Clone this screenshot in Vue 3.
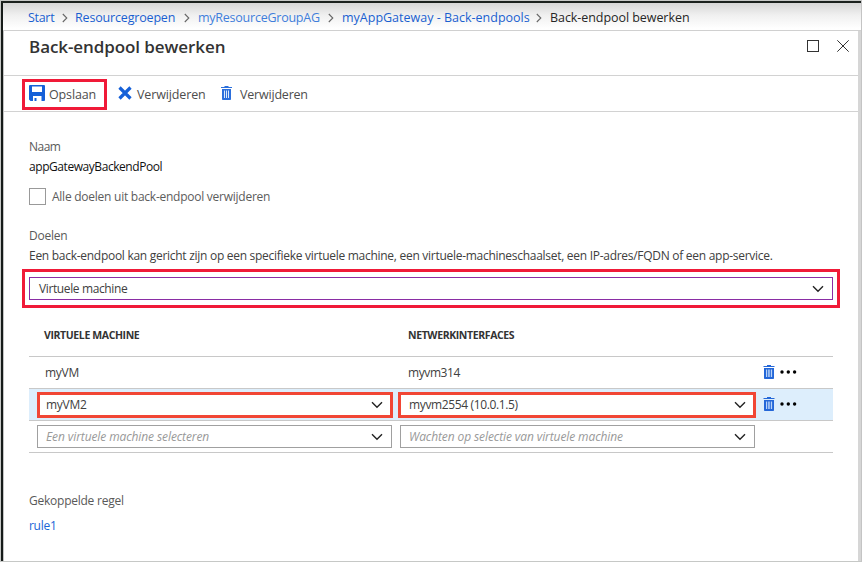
<script setup>
const crumbs = [
  { label: 'Start', cls: 'c1' },
  { label: 'Resourcegroepen', cls: 'c2' },
  { label: 'myResourceGroupAG', cls: 'c3' },
  { label: 'myAppGateway - Back-endpools', cls: 'c4' },
]
</script>

<template>
  <div class="frame">
    <nav class="crumbs">
      <template v-for="c in crumbs" :key="c.label">
        <a :class="c.cls">{{ c.label }}</a>
        <svg class="sep" width="6" height="10" viewBox="0 0 6 10"><path d="M.8 1 4.800 5 .8 9" /></svg>
      </template>
      <span class="c5">Back-endpool bewerken</span>
    </nav>

    <div class="blade">
      <header class="title-bar">
        <h1>Back-endpool bewerken</h1>
        <div class="window-icons">
          <svg width="12" height="12" viewBox="0 0 12 12"><rect x=".5" y=".5" width="11" height="11" /></svg>
          <svg width="12" height="12" viewBox="0 0 12 12"><path d="M.3 .3 11.7 11.7M11.7 .3 .3 11.7" /></svg>
        </div>
      </header>

      <div class="toolbar">
        <button class="save">
          <svg width="16" height="16" viewBox="0 0 16 16">
            <path fill="#1560d8" d="M1 0h14a1 1 0 0 1 1 1v14a1 1 0 0 1-1 1H1.500L0 14.500V1a1 1 0 0 1 1-1z" />
            <path fill="#fff" d="M3 1.500h10V7H3zM4 11h8.500v5H7.500v-3H5.500v3H4z" />
          </svg>
          <span>Opslaan</span>
        </button>
        <button class="remove">
          <svg width="14" height="14" viewBox="0 0 14 14"><path d="M1.500 1.500 12.500 12.500M12.500 1.500 1.500 12.500" stroke="#1560d8" stroke-width="3.200" fill="none" /></svg>
          <span>Verwijderen</span>
        </button>
        <button class="delete">
          <svg width="11" height="14" viewBox="0 0 11 14">
            <path fill="#2b6fdc" d="M3.500 0h4v1H11v1H0V1h3.500zM1 3h9v10.200a.8.800 0 0 1-.8.800H1.800a.8.800 0 0 1-.8-.8z" />
            <path fill="#dce9fb" d="M3 4.500h1V12H3zM5 4.500h1V12H5zM7 4.500h1V12H7z" />
          </svg>
          <span>Verwijderen</span>
        </button>
      </div>

      <main>
        <div class="label name-label"><span>Naam</span></div>
        <div class="value"><span>appGatewayBackendPool</span></div>
        <label class="check"><i></i><span>Alle doelen uit back-endpool verwijderen</span></label>
        <div class="label targets"><span>Doelen</span></div>
        <p><span>Een back-endpool kan gericht zijn op een specifieke virtuele machine, een virtuele-machineschaalset, een IP-adres/FQDN of een app-service.</span></p>

        <div class="marked">
          <div class="select primary">
            <span>Virtuele machine</span>
            <svg class="chev" width="12" height="8" viewBox="0 0 12 8"><path d="M1 1.200 6 6.200 11 1.200" /></svg>
          </div>
        </div>

        <section class="table">
          <div class="row head"><b class="h1">VIRTUELE MACHINE</b><b class="h2">NETWERKINTERFACES</b></div>
          <div class="row plain">
            <span class="vm">myVM</span><span class="nic">myvm314</span>
            <div class="actions">
              <svg width="12" height="14" viewBox="0 0 12 14">
                <path fill="#2467d8" d="M4 0h4v1h3.500v1H.5V1H4zM1 3h10v10.200a.8.800 0 0 1-.8.800H1.800a.8.800 0 0 1-.8-.8z" />
                <path fill="#b9d3f8" d="M3 4.500h1.200V12H3zM5 4.500h.8V12H5zM6.300 4.500h.8V12h-.8zM7.900 4.500h1.200V12H7.900z" />
              </svg>
              <svg class="dots" width="17" height="4" viewBox="0 0 17 4"><circle cx="2" cy="2" r="1.700" /><circle cx="8.300" cy="2" r="1.700" /><circle cx="14.600" cy="2" r="1.700" /></svg>
            </div>
          </div>
          <div class="row active">
            <div class="select hot">
              <span class="t1">myVM2</span>
              <svg class="chev" width="12" height="8" viewBox="0 0 12 8"><path d="M1 1.200 6 6.200 11 1.200" /></svg>
            </div>
            <div class="select hot second">
              <span class="t2">myvm2554 (10.0.1.5)</span>
              <svg class="chev" width="12" height="8" viewBox="0 0 12 8"><path d="M1 1.200 6 6.200 11 1.200" /></svg>
            </div>
            <div class="actions">
              <svg width="12" height="14" viewBox="0 0 12 14">
                <path fill="#2467d8" d="M4 0h4v1h3.500v1H.5V1H4zM1 3h10v10.200a.8.800 0 0 1-.8.800H1.800a.8.800 0 0 1-.8-.8z" />
                <path fill="#b9d3f8" d="M3 4.500h1.200V12H3zM5 4.500h.8V12H5zM6.300 4.500h.8V12h-.8zM7.900 4.500h1.200V12H7.900z" />
              </svg>
              <svg class="dots" width="17" height="4" viewBox="0 0 17 4"><circle cx="2" cy="2" r="1.700" /><circle cx="8.300" cy="2" r="1.700" /><circle cx="14.600" cy="2" r="1.700" /></svg>
            </div>
          </div>
          <div class="row empty">
            <div class="select">
              <em class="e1">Een virtuele machine selecteren</em>
              <svg class="chev" width="12" height="8" viewBox="0 0 12 8"><path d="M1 1.200 6 6.200 11 1.200" /></svg>
            </div>
            <div class="select">
              <em class="e2">Wachten op selectie van virtuele machine</em>
              <svg class="chev" width="12" height="8" viewBox="0 0 12 8"><path d="M1 1.200 6 6.200 11 1.200" /></svg>
            </div>
          </div>
        </section>

        <div class="label rule"><span>Gekoppelde regel</span></div>
        <a class="rule-link">rule1</a>
      </main>
    </div>
  </div>
</template>

<style>
html, body { margin: 0; background: #fff; overflow: hidden; }
</style>

<style scoped>
* { box-sizing: border-box; }
.frame {
  width: 862px; height: 562px; padding: 2px 0 0 2px;
  border: 1px solid #c6c8c6; border-right-color: #c4c4c4;
  background: linear-gradient(#1b211e, #1b211e) 0 0 / 100% 2px no-repeat, linear-gradient(#161b19, #161b19) 0 0 / 2px 100% no-repeat, #fff;
  font: 12px/16px "Open Sans", "Noto Sans", sans-serif; color: #404040;
}
.crumbs {
  height: 28px; display: flex; align-items: center; padding: 2px 0 0 25px;
  background: linear-gradient(#d6d6d6, #f0f0f0 45%, #fff 95%);
  border-bottom: 1px solid #d0d0d0; white-space: nowrap; color: #262626; font-size: 12.500px;
}
.crumbs a { color: #1a5fd0; flex: none; }
.sep { flex: none; fill: none; stroke: #666; stroke-width: 1.100; }
.crumbs .c1 { width: 34px; }
.crumbs .c2 { width: 101px; }
.crumbs .c3 { width: 123px; color: #3f7edb; }
.crumbs .c4 { width: 189px; }
.c1 { letter-spacing: -.3px; }
.c2 { letter-spacing: -.17px; }
.c3 { letter-spacing: -.24px; }
.c4 { letter-spacing: 0; }
.c5 { letter-spacing: -.06px; margin-left: 8px; }
.c1 + .sep { margin-right: 7px; }
.c2 + .sep { margin: 0 8px; }
.c3 + .sep { margin: 0 8px 0 7px; }
.c4 + .sep { margin-left: 5px; }
.blade { height: 530px; border-left: 1px solid #c4c4c4; border-right: 3px solid #d6d6d6; }
.title-bar { height: 45px; border-bottom: 1px solid #d2d2d2; display: flex; justify-content: space-between; align-items: flex-start; padding: 9px 9px 0 25px; }
h1 { margin: -5px 0 0; font-size: 17px; line-height: 24px; font-weight: 600; color: #333; letter-spacing: -.08px; white-space: nowrap; }
.window-icons { display: flex; gap: 18px; fill: none; stroke: #333; }
.toolbar { height: 36px; border-bottom: 1px solid #d2d2d2; display: flex; align-items: flex-start; padding: 3px 0 0 18px; }
button { border: 0; background: none; padding: 0; margin: 0; font: inherit; font-size: 12.500px; color: #4d4d4d; display: flex; align-items: center; height: 31px; white-space: nowrap; letter-spacing: -.2px; }
.save { width: 85px; border: 3px solid #f01a38; padding-left: 4px; gap: 4px; letter-spacing: -.13px; }
.save svg { margin-top: -3px; }
.remove { width: 102px; padding-left: 11px; gap: 5px; letter-spacing: -.13px; }
.remove svg { margin-top: -3px; }
.delete { padding-left: 12px; gap: 8px; }
.delete svg { margin-top: -3px; }
main { padding: 24px 0 0 18px; letter-spacing: -.28px; }
main span, main em, main b { white-space: nowrap; }
.label, .value, p, .rule-link { margin: 0 0 0 7px; height: 20px; line-height: 22px; }
.label { color: #595959; letter-spacing: -.24px; }
.name-label { letter-spacing: -.5px; }
.value { color: #111; letter-spacing: -.44px; }
.check { display: flex; align-items: center; gap: 6px; height: 18px; margin: 11px 0 0 7px; color: #5c5c5c; letter-spacing: -.25px; }
.check i { width: 17px; height: 17px; border: 1px solid #999; }
.check span { padding-top: 1px; }
.targets { margin-top: 20px; }
.marked { width: 818px; height: 39px; margin-top: 4px; border: 3px solid #f01a38; padding: 5px 4px; }
.select { height: 23px; border: 1px solid #a0a0a0; background: #fff; display: flex; align-items: center; justify-content: space-between; padding: 0 8px; flex: none; }
.chev { fill: none; stroke: #222; stroke-width: 1.400; flex: none; }
.primary { border-color: #8a2da5; padding: 0 8px 0 9px; letter-spacing: -.38px; }
.table { width: 804px; margin: 5px 0 0 7px; }
.row { display: flex; align-items: center; height: 32px; border-bottom: 1px solid #c8c8c8; }
.head { height: 44px; padding: 1px 0 0 15px; color: #333; font-size: 10.500px; letter-spacing: -.38px; }
.h1 { width: 364px; }
.plain { padding-left: 16px; }
.vm { width: 363px; }
.nic { width: 355px; letter-spacing: -.4px; }
.active { background: #ddeefc; padding-left: 8px; }
.hot { width: 356px; height: 26px; border: 3px solid #f14635; padding: 0 7px 0 6px; }
.second { margin-left: 5px; width: 358px; padding: 0 7px 0 8px; letter-spacing: -.36px; }
.active .actions { margin-left: 7px; }
.actions { display: flex; align-items: center; gap: 5px; }
.actions svg { margin-top: -2px; }
.actions .dots { margin-top: -2px; }
.empty { padding-left: 8px; gap: 8px; }
.empty .select { width: 355px; letter-spacing: -.1px; }
em { color: #999; }
.rule { margin-top: 37px; }
.rule-link { display: block; margin-top: 5px; color: #1a66d6; }
</style>
